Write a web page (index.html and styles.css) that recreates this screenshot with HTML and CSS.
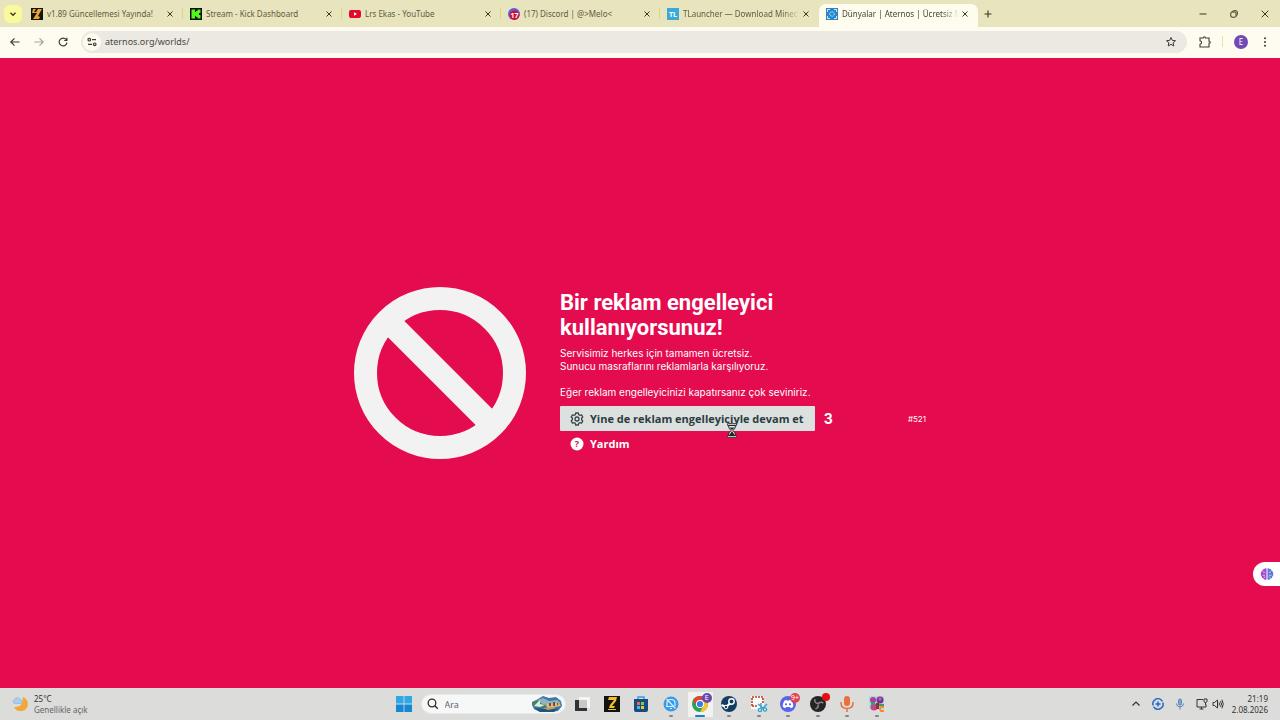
FILE: index.html
```html
<!DOCTYPE html>
<html lang="tr">
<head>
    <meta charset="UTF-8">
    <meta name="viewport" content="width=device-width, initial-scale=1.0">
    <title>Dünyalar | Aternos | Ücretsiz Minecraft Sunucusu</title>
    <link rel="stylesheet" href="styles.css">
</head>
<body>
    <!-- sekmeler -->
    <header class="tab-strip">
        <button class="tab-search" aria-label="Sekmelerde ara">
            <svg width="8" height="8" viewBox="0 0 8 8"><path d="M1.5 2.8 4 5.2 6.5 2.8" fill="none" stroke="#3a3820" stroke-width="1.4"/></svg>
        </button>
        <div class="tabs">
            <div class="tab">
                <svg class="favicon" viewBox="0 0 12 12"><path fill="#17130c" d="M0 0h12v12H0z"/><path fill="#e5a52c" d="M2 1h9L7 8l2 1-1 2H2l4-6H1z"/><path fill="#17130c" d="m5 1-2 3h2l2-3z"/></svg>
                <span class="tab-title">v1.89 Güncellemesi Yayında!</span>
                <button class="tab-close" aria-label="Kapat"><svg viewBox="0 0 8 8"><path d="m1.5 1.5 5 5m0-5-5 5"/></svg></button>
            </div>
            <div class="tab">
                <svg class="favicon" viewBox="0 0 12 12"><path fill="#0c120b" d="M0 0h12v12H0z"/><path fill="#52f71c" d="M1.5 1.5H5V4h1V3h1.500V1.500h3V5H9v2h1.500v3.500h-3V9H6V8H5v2.500H1.500z"/></svg>
                <span class="tab-title">Stream - Kick Dashboard</span>
                <button class="tab-close" aria-label="Kapat"><svg viewBox="0 0 8 8"><path d="m1.5 1.5 5 5m0-5-5 5"/></svg></button>
            </div>
            <div class="tab">
                <svg class="favicon" viewBox="0 0 12 12"><rect y="2" width="12" height="8" rx="2" fill="#e5092f"/><path fill="#fff" d="m5 4.300 3 1.700-3 1.700z"/></svg>
                <span class="tab-title">Lrs Ekas - YouTube</span>
                <button class="tab-close" aria-label="Kapat"><svg viewBox="0 0 8 8"><path d="m1.5 1.5 5 5m0-5-5 5"/></svg></button>
            </div>
            <div class="tab">
                <svg class="favicon" viewBox="0 0 12 12"><circle cx="6" cy="6" r="6" fill="#5a5fd0"/><circle cx="6.500" cy="7.300" r="4.700" fill="#d30f2e"/><text x="6.500" y="10" class="favicon-count">17</text></svg>
                <span class="tab-title">(17) Discord | @&gt;Melo&lt;</span>
                <button class="tab-close" aria-label="Kapat"><svg viewBox="0 0 8 8"><path d="m1.5 1.5 5 5m0-5-5 5"/></svg></button>
            </div>
            <div class="tab">
                <svg class="favicon" viewBox="0 0 12 12"><path fill="#39a9d6" d="M0 0h12v12H0z"/><text x="6" y="9" class="favicon-tl">TL</text></svg>
                <span class="tab-title fade">TLauncher — Download Minec</span>
                <button class="tab-close" aria-label="Kapat"><svg viewBox="0 0 8 8"><path d="m1.5 1.5 5 5m0-5-5 5"/></svg></button>
            </div>
            <div class="tab active">
                <svg class="favicon" viewBox="0 0 12 12"><path fill="#2b87c8" d="M0 0h12v12H0z"/><path fill="none" stroke="#e4f2fa" stroke-width=".9" d="M1.500 4V1.500H4M8 1.500h2.500V4M10.500 8v2.500H8M4 10.500H1.500V8"/><path fill="none" stroke="#e4f2fa" stroke-dasharray="2 1" d="m6 3.300 2.700 2.700L6 8.700 3.300 6z"/></svg>
                <span class="tab-title fade">Dünyalar | Aternos | Ücretsiz M</span>
                <button class="tab-close" aria-label="Kapat"><svg viewBox="0 0 8 8"><path d="m1.5 1.5 5 5m0-5-5 5"/></svg></button>
            </div>
        </div>
        <button class="new-tab" aria-label="Yeni sekme">
            <svg width="8" height="8" viewBox="0 0 8 8"><path d="M4 .5v7M.5 4h7" stroke="#3a3820" stroke-width="1.100"/></svg>
        </button>
        <div class="window-controls">
            <button aria-label="Küçült"><svg width="8" height="8" viewBox="0 0 8 8"><path d="M.5 4h7"/></svg></button>
            <button aria-label="Önceki boyut"><svg width="8" height="8" viewBox="0 0 8 8"><rect x=".8" y="2" width="5.200" height="5.200" rx="1.200"/><path d="M2.300 1.600Q2.500.8 3.500.8H6q1.300 0 1.300 1.300v2.500q0 .9-.9 1.200"/></svg></button>
            <button aria-label="Kapat"><svg width="8" height="8" viewBox="0 0 8 8"><path d="m.7.7 6.600 6.600m0-6.600L.7 7.300"/></svg></button>
        </div>
    </header>

    <!-- adres çubuğu -->
    <nav class="toolbar">
        <button class="nav-button" aria-label="Geri"><svg viewBox="0 0 12 12"><path d="M10.500 6H2M5.500 2.300 1.800 6l3.700 3.700"/></svg></button>
        <button class="nav-button" aria-label="İleri" disabled><svg viewBox="0 0 12 12"><path d="M1.500 6H10M6.500 2.300 10.200 6 6.500 9.700"/></svg></button>
        <button class="nav-button" aria-label="Yenile"><svg viewBox="0 0 12 12"><path d="M9.200 3.700A3.900 3.900 0 1 0 9.900 6.600M9.900 1.800v2.700H7.200"/></svg></button>
        <div class="omnibox">
            <button class="site-info" aria-label="Site bilgileri"><svg width="10" height="10" viewBox="0 0 10 10" fill="none" stroke="#3c3b36" stroke-width="1.200"><circle cx="2.300" cy="2.700" r="1.300"/><path d="M5 2.700h4M1 7.300h4"/><circle cx="7.700" cy="7.300" r="1.300"/></svg></button>
            <input type="text" class="address" aria-label="Adres" value="aternos.org/worlds/">
            <button class="bookmark" aria-label="Yer işareti ekle"><svg width="12" height="12" viewBox="0 0 12 12"><path d="m6 1.500 1.300 2.900 3.200.3-2.400 2.100.7 3.200L6 8.300 3.200 10l.7-3.200-2.400-2.100 3.200-.3z" fill="none" stroke="#3c3b36"/></svg></button>
        </div>
        <div class="toolbar-end">
            <button aria-label="Uzantılar"><svg width="12" height="12" viewBox="0 0 12 12"><path d="M1 2h3.200q0-1.300 1.100-1.300T6.400 2H10v3.200q1.300 0 1.300 1.100T10 7.400V11H1V8.300q1.600-.3 1.600-1.800T1 4.700z" fill="none" stroke="#3c3b36" stroke-width="1.100"/></svg></button>
            <span class="divider"></span>
            <button class="avatar">E</button>
            <button aria-label="Menü"><svg width="12" height="12" viewBox="0 0 12 12" fill="#3c3b36"><circle cx="6" cy="2.300" r="1"/><circle cx="6" cy="6" r="1"/><circle cx="6" cy="9.700" r="1"/></svg></button>
        </div>
    </nav>

    <main class="page">
        <section class="notice">
            <svg class="ban" viewBox="0 0 172 172" fill="none" stroke="#f1f2f1" stroke-width="23"><circle cx="86" cy="86" r="74.500"/><path d="m36 36 100 100"/></svg>
            <div class="notice-text">
                <h1>Bir reklam engelleyici kullanıyorsunuz!</h1>
                <p>Servisimiz herkes için tamamen ücretsiz.<br>Sunucu masraflarını reklamlarla karşılıyoruz.<br><br>Eğer reklam engelleyicinizi kapatırsanız çok seviniriz.</p>
                <div class="actions">
                    <button class="btn btn-continue">
                        <svg viewBox="0 0 14 14" fill="none" stroke="#35464a" stroke-width="1.300"><path stroke-linejoin="round" d="M5.700 1h2.600l.4 1.700 1.100.6 1.700-.5 1.300 2.200L11.600 6.200v1.600l1.200 1.200-1.300 2.200-1.700-.5-1.100.6L8.300 13H5.700l-.4-1.700-1.100-.6-1.700.5L1.200 9l1.200-1.200V6.200L1.200 5l1.300-2.200 1.700.5 1.100-.6z"/><circle cx="7" cy="7" r="2"/></svg>
                        Yine de reklam engelleyiciyle devam et
                        <svg class="cursor" viewBox="0 0 10 15"><path fill="#bfc2c1" stroke="#333" stroke-width=".8" d="M.5.500h9v2h-9zM.5 12.500h9v2h-9z"/><path fill="#e8eaea" stroke="#222" d="M1.500 2.500h7Q8.500 5.500 6 7.500q2.500 2 2.500 5h-7q0-3 2.500-5-2.500-2-2.500-5z"/><path fill="#222" d="M2.500 4.500h5L5 7zM5 8l2.500 4h-5z"/></svg>
                    </button>
                    <span class="countdown">3</span>
                    <small class="code">#521</small>
                </div>
                <button class="btn btn-help">
                    <svg viewBox="0 0 14 14"><circle cx="7" cy="7" r="6.500" fill="#fff"/><text x="7" y="10" class="question">?</text></svg>
                    Yardım
                </button>
            </div>
        </section>
        <button class="side-widget" aria-label="Asistan">
            <svg width="14" height="14" viewBox="0 0 14 14"><path fill="#a548cf" d="M6.500 1.500v11Q4.500 13.500 3.500 11.500 1.500 11.300 1.600 9.300 0 8 1 6.300.5 4.500 2.300 4q.2-2 1.900-2 1-1.200 2.300-.5z"/><path fill="#5a78dc" d="M7.500 1.500v11q2 1 3-1 2-.2 1.900-2.200Q14 8 13 6.300q.5-1.800-1.300-2.300-.2-2-1.900-2-1-1.200-2.300-.5z"/><path fill="none" stroke="#f2d7f3" stroke-width=".8" d="M3 5q1.500-.5 2 .8M2.500 8.500q1.500-1 2.500 0M4 11q0-1 1.200-1.200M11 5q-1.500-.5-2 .8M11.500 8.500q-1.500-1-2.500 0M10 11q0-1-1.200-1.200"/></svg>
        </button>
    </main>

    <!-- görev çubuğu -->
    <footer class="taskbar">
        <div class="weather">
            <svg width="16" height="16" viewBox="0 0 16 16"><path fill="#f2a73a" d="M11 1A7.300 7.300 0 1 1 2 11q9 1 9-10z"/><path fill="#a9cdec" stroke="#7fb0dc" stroke-width=".6" d="M2.500 7.500a2 2 0 0 1 .2-3.900 3 3 0 0 1 5.500-.3 2.200 2.200 0 0 1 .6 4.200z"/></svg>
            <div class="weather-text"><span class="temperature">25°C</span><span>Genellikle açık</span></div>
        </div>

        <div class="task-center">
            <button class="start" aria-label="Başlat"><svg width="16" height="16" viewBox="0 0 16 16"><path fill="#2fa9e6" d="M0 0h7.600v7.600H0zM8.400 0H16v7.600H8.400z"/><path fill="#1488d4" d="M0 8.400h7.600V16H0zM8.400 8.400H16V16H8.400z"/></svg></button>
            <label class="search">
                <svg width="12" height="12" viewBox="0 0 12 12" fill="none" stroke="#2b2b2b" stroke-width="1.300"><circle cx="5" cy="5" r="3.800"/><path d="m7.800 7.800 3 3"/></svg>
                <input type="text" placeholder="Ara" aria-label="Ara">
                <svg width="32" height="18" viewBox="0 0 32 18"><path fill="#3d77a8" d="m1 7 6-3 5-3 6 2 7-1 5 4 1 5-4 5-7 1H9l-6-3-2-4z"/><path fill="#8eb5bd" d="m4 6 8-3 6 3 8-1 4 3-9 2-14-1z"/><path fill="#d6bd82" d="m13 9 15-1 2 3-13 2z"/><path fill="#44835a" d="m1 8 6-3 4 4 5 1-4 3-10-2z"/><path fill="#dcebe4" d="m7 7 2-2v4l5 1-5 2-6-1z"/><path fill="#784d39" d="M18 8h2v3h-2zM22 7h2v4h-2zM26 8h1v2h-1z"/><path fill="#1c587c" d="m3 13 9 1 15-1-4 4H9z"/><path fill="#c9a06d" d="m12 13 10-1 4 1-9 2z"/></svg>
            </label>
            <div class="apps">
                <button class="app" aria-label="Görev görünümü"><svg viewBox="0 0 18 18"><path fill="#f5f5f5" d="M6 2h11v11H6z"/><path fill="#303234" d="M2 5h4v8h8v3H2z"/><path fill="#9a9b9b" d="M6 5h8v8H6z" opacity=".5"/></svg></button>
                <button class="app" aria-label="Zula"><svg viewBox="0 0 18 18"><path fill="#15120b" d="M1 1h16v16H1z"/><path fill="#ecc12d" d="M6 2h8l-1 4-4 5h3l-1 2H6l1-3 4-5H5zM5 14h8v1H5z"/></svg></button>
                <button class="app" aria-label="Mağaza"><svg viewBox="0 0 18 18"><path fill="none" stroke="#3b9de0" stroke-width="1.500" d="M6 5V2h6v3"/><path fill="#174c83" d="M2 4h14v11q0 2-2 2H4q-2 0-2-2z"/><path fill="#f1644d" d="M5 7h3v3H5z"/><path fill="#8acc41" d="M9 7h3v3H9z"/><path fill="#42b9ed" d="M5 11h3v3H5z"/><path fill="#f8c52d" d="M9 11h3v3H9z"/></svg></button>
                <button class="app running" aria-label="Bildirimler"><svg viewBox="0 0 18 18"><circle cx="9" cy="9" r="7.500" fill="#3a9ce9"/><path fill="none" stroke="#d8effc" stroke-width="1.200" stroke-linejoin="round" d="M4 11.500h8.500M5 11V8q0-3.500 4-3.500T13 8v3M8 13.500h2M4.500 4l9 9.500"/></svg></button>
                <button class="app running current" aria-label="Chrome"><svg viewBox="0 0 18 18"><circle cx="9" cy="9" r="8" fill="#29a354"/><path fill="#f7c52d" d="M9 5h6.900A8 8 0 0 1 9 17l3.500-6z"/><path fill="#df4638" d="M5.500 11 2.100 5A8 8 0 0 1 15.900 5H9z"/><circle cx="9" cy="9" r="4" fill="#fff"/><circle cx="9" cy="9" r="3.100" fill="#397ee8"/></svg><span class="badge badge-profile">E</span></button>
                <button class="app running" aria-label="Steam"><svg viewBox="0 0 18 18"><circle cx="9" cy="9" r="8" fill="#123d63"/><path fill="none" stroke="#fff" stroke-width="2.200" d="m1.500 10 4.500 2 4.500-4"/><circle cx="11.500" cy="6.500" r="2.700" fill="#123d63" stroke="#fff" stroke-width="1.400"/><circle cx="6" cy="12" r="1.800" fill="#123d63" stroke="#fff"/></svg></button>
                <button class="app running" aria-label="Ekran alıntısı"><svg viewBox="0 0 18 18"><path fill="#fafafa" d="M1 1h13v13H1z"/><path fill="none" stroke="#bd3b24" stroke-width="1.600" stroke-dasharray="2 1" d="M2 11V2h11v7"/><path fill="none" stroke="#bd3b24" stroke-width="1.600" stroke-dasharray="2 1" d="M2 11h6"/><path fill="none" stroke="#33a3cc" stroke-width="1.500" d="m8 9 5 4m4-4-5 5M11 8v5"/><circle cx="10" cy="15" r="1.700" fill="none" stroke="#33a3cc" stroke-width="1.200"/><circle cx="15" cy="14.500" r="1.700" fill="none" stroke="#33a3cc" stroke-width="1.200"/></svg></button>
                <button class="app running" aria-label="Discord"><svg viewBox="0 0 18 18"><circle cx="9" cy="9" r="8" fill="#5865e8"/><path fill="#fff" d="M5.500 5.500 8 5l.4.700h1.200L10 5l2.500.5q2 3 1.700 6.500l-2.600 1.300-.8-1.300H7.200l-.8 1.300L3.800 12q-.3-3.500 1.700-6.500z"/><circle cx="7" cy="9.300" r="1.100" fill="#5865e8"/><circle cx="11" cy="9.300" r="1.100" fill="#5865e8"/></svg><span class="badge badge-count">9+</span></button>
                <button class="app running" aria-label="OBS"><svg viewBox="0 0 18 18"><circle cx="9" cy="9" r="8" fill="#242526"/><path fill="none" stroke="#8c8e8f" stroke-width="1.400" d="M9 8.500Q5 8 6 4m3 5q2-3 5.500-1M9 9.500q1 3-2.500 4.500"/></svg><span class="badge badge-record"></span></button>
                <button class="app running" aria-label="Mikrofon"><svg viewBox="0 0 18 18"><rect x="6" y="1" width="6" height="10" rx="3" fill="#e8713d"/><path fill="none" stroke="#e8713d" stroke-width="1.500" d="M3 7v1q0 5.500 6 5.500T15 8V7M9 13.500V17"/></svg></button>
                <button class="app running" aria-label="Oyun"><svg viewBox="0 0 18 18"><path fill="#a7dce1" d="M1 1h15v13H1z"/><circle cx="5" cy="5" r="3" fill="#b23aa4"/><circle cx="12" cy="5" r="3.500" fill="#7b318d"/><circle cx="12" cy="4" r="1.500" fill="#d85bc2"/><circle cx="6" cy="12" r="3.500" fill="#c5438e"/><path fill="#35a15c" d="M3 7h4v3H3zM10 9h6v2h-6z"/><path fill="#873247" d="M8 8h3v6H8z"/><path fill="none" stroke="#ef8b35" stroke-width="2" d="M16 12h-3q-2 1 0 4h3"/></svg></button>
            </div>
        </div>

        <div class="tray">
            <button aria-label="Gizli simgeler"><svg viewBox="0 0 12 12" fill="none" stroke="#333" stroke-width="1.200"><path d="m2.500 7.500 3.500-3.500 3.500 3.500"/></svg></button>
            <button aria-label="Eşitleme"><svg viewBox="0 0 12 12" fill="none" stroke="#2668c9" stroke-width="1.500"><path d="M1.200 7.500A5 5 0 0 1 9.500 2.300l1 1M10.800 4.500A5 5 0 0 1 2.500 9.700l-1-1"/><path d="M6 3.500v5M3.500 6h5"/></svg></button>
            <button aria-label="Mikrofon kullanımda"><svg viewBox="0 0 12 12" fill="none" stroke="#5d83b5"><rect x="4.500" y="1" width="3" height="6" rx="1.500" fill="#7da4d4"/><path d="M2.500 5.500q0 3.300 3.500 3.300t3.500-3.300M6 9v2.500"/></svg></button>
            <button class="tray-quick" aria-label="Ağ ve ses">
                <svg viewBox="0 0 12 12" fill="none" stroke="#333"><path d="M7 1.500H1v7.500h9V6.500M3.500 11h4M5.500 9v2"/><path d="M8 1v2.200q0 1.300 1.500 1.300T11 3.200V1zM9.500 4.500V7"/></svg>
                <svg viewBox="0 0 12 12" fill="none" stroke="#333"><path d="M1 4.500h1.500L5.500 2v8L2.500 7.500H1zM7 4.500q1 1.500 0 3M8.500 3q2 3 0 6M10 1.700q2.500 4.300 0 8.600"/></svg>
            </button>
            <div class="clock"><span>21:19</span><span>2.08.2026</span></div>
        </div>
    </footer>
</body>
</html>
```
FILE: styles.css
```css
* {
    box-sizing: border-box;
}

body {
    margin: 0;
    min-height: 100vh;
    display: flex;
    flex-direction: column;
    font-family: "Noto Sans", "Open Sans", sans-serif;
    font-size: 8px;
    color: #3b3a30;
    background: #e40b4e;
}

button {
    display: flex;
    align-items: center;
    justify-content: center;
    padding: 0;
    border: 0;
    background: none;
    font: inherit;
    color: inherit;
}

input {
    min-width: 0;
    padding: 0;
    border: 0;
    outline: 0;
    background: none;
    font: inherit;
    color: inherit;
}

svg {
    flex: none;
}

/* sekmeler */
.tab-strip {
    display: flex;
    align-items: center;
    height: 27px;
    padding-left: 4px;
    background: #e8e4be;
}

.tab-search {
    width: 18px;
    height: 18px;
    margin-right: 2px;
    border-radius: 6px;
    background: #fafa9c;
}

.tabs {
    display: flex;
    flex: 0 1 954px;
    min-width: 0;
    align-self: flex-end;
}

.tab {
    display: flex;
    flex: 1 1 0;
    align-items: center;
    gap: 4px;
    min-width: 0;
    height: 23px;
    padding: 0 7px 4px;
    color: #5f5c40;
    background: linear-gradient(#d6da7c, #d6da7c) no-repeat right 4px / 1px 11px;
}

.tab:nth-child(5) {
    background: none;
}

.tab.active {
    color: #45443a;
    border-radius: 7px 7px 0 0;
    background: #fefcec;
}

.favicon {
    width: 12px;
    height: 12px;
}

.favicon-count,
.favicon-tl {
    font-size: 7px;
    font-weight: bold;
    text-anchor: middle;
    fill: #fff;
}

.tab-title {
    flex: 1;
    overflow: hidden;
    white-space: nowrap;
}

.fade {
    mask-image: linear-gradient(to right, #000 85%, transparent);
}

.tab-close {
    width: 12px;
    height: 12px;
    margin-left: -4px;
}

.tab-close svg {
    width: 8px;
    height: 8px;
    fill: none;
    stroke: #3a3820;
}

.new-tab {
    width: 20px;
    height: 20px;
}

.window-controls {
    display: flex;
    margin-left: auto;
}

.window-controls button {
    width: 31px;
    height: 26px;
}

.window-controls svg {
    fill: none;
    stroke: #3a3820;
}

/* adres çubuğu */
.toolbar {
    display: flex;
    align-items: center;
    height: 31px;
    padding: 0 3px 2px;
    background: #fefcf0;
}

.nav-button {
    width: 24px;
    height: 24px;
}

.nav-button svg {
    width: 12px;
    height: 12px;
    fill: none;
    stroke: #3c3b36;
    stroke-width: 1.2;
}

.nav-button:disabled {
    opacity: 0.45;
}

.omnibox {
    display: flex;
    flex: 1;
    align-items: center;
    height: 22px;
    margin-left: 6px;
    padding: 0 10px 0 2px;
    border-radius: 11px;
    background: #ece8e2;
}

.site-info {
    width: 18px;
    height: 18px;
    border-radius: 50%;
    background: #fdfbf0;
}

.address {
    flex: 1;
    margin-left: 4px;
    font-size: 9px;
    color: #4a4843;
}

.toolbar-end {
    display: flex;
    align-items: center;
    justify-content: space-between;
    width: 90px;
    padding: 0 6px 0 12px;
}

.divider {
    width: 1px;
    height: 11px;
    background: #dcea98;
}

.avatar {
    width: 14px;
    height: 14px;
    border-radius: 50%;
    background: #7049b5;
    color: #fff;
}

/* reklam engelleyici uyarısı */
.page {
    position: relative;
    display: flex;
    flex: 1;
    align-items: center;
    justify-content: center;
    font-family: Inter, Roboto, sans-serif;
    color: #fff;
}

.notice {
    display: flex;
    align-items: center;
    gap: 34px;
    width: 572px;
}

.ban {
    width: 172px;
    height: 172px;
}

.notice-text {
    flex: 1;
}

h1 {
    max-width: 300px;
    margin: 0 0 7px;
    font-family: Roboto, sans-serif;
    font-size: 22px;
    line-height: 25px;
}

p {
    margin: 0 0 7px;
    font-size: 10px;
    line-height: 13px;
}

.actions {
    display: flex;
    align-items: center;
}

.btn {
    position: relative;
    gap: 6px;
    height: 25px;
    padding: 0 11px 0 10px;
    font-family: "Open Sans", sans-serif;
    font-size: 11px;
    font-weight: bold;
    white-space: nowrap;
}

.btn svg {
    width: 14px;
    height: 14px;
}

.btn-continue {
    border-radius: 1px;
    background: #dce0df;
    color: #2c3c40;
}

.btn .cursor {
    position: absolute;
    right: 78px;
    top: 17px;
    width: 10px;
    height: 15px;
}

.question {
    font-size: 9px;
    text-anchor: middle;
    fill: #b01848;
}

.countdown {
    margin-left: 9px;
    font-size: 14px;
    font-weight: bold;
}

.code {
    margin-left: auto;
    font-size: 8px;
}

.side-widget {
    position: absolute;
    right: 0;
    top: 504px;
    width: 27px;
    height: 24px;
    border-radius: 12px 0 0 12px;
    background: #fff;
}

/* görev çubuğu */
.taskbar {
    display: grid;
    grid-template-columns: 1fr auto 1fr;
    align-items: center;
    height: 32px;
    padding: 0 12px;
    background: #dcdcda;
}

.weather {
    display: flex;
    align-items: center;
    gap: 6px;
}

.weather-text,
.clock {
    display: flex;
    flex-direction: column;
    line-height: 11px;
    color: #666;
}

.weather-text .temperature,
.clock {
    color: #333;
}

.task-center {
    display: flex;
    align-items: center;
}

.start {
    width: 30px;
    height: 30px;
}

.search {
    display: flex;
    align-items: center;
    gap: 6px;
    width: 145px;
    height: 20px;
    margin: 0 2px;
    padding: 0 2px 0 5px;
    border: 1px solid #e8e8e8;
    border-radius: 10px;
    background: #f6f7f7;
}

.search input {
    flex: 1;
    font-size: 9px;
}

.search input::placeholder {
    color: #666;
}

.apps {
    display: flex;
    width: 324px;
}

.app {
    position: relative;
    flex: 1;
    height: 31px;
}

.app svg {
    width: 18px;
    height: 18px;
}

.running::after {
    content: "";
    position: absolute;
    left: 50%;
    bottom: 3px;
    width: 4px;
    height: 2px;
    border-radius: 1px;
    transform: translateX(-50%);
    background: #858585;
}

.current {
    background: linear-gradient(#f1f1f0, #f1f1f0) no-repeat center / 25px 25px;
}

.current::after {
    width: 10px;
    background: #1680c8;
}

.badge {
    position: absolute;
    right: 3px;
    top: 4px;
    min-width: 10px;
    height: 10px;
    border-radius: 5px;
    font-size: 7px;
    line-height: 10px;
    text-align: center;
    color: #fff;
}

.badge-profile {
    background: #6949ae;
}

.badge-count {
    background: #df4254;
}

.badge-record {
    width: 8px;
    min-width: 8px;
    height: 8px;
    background: #e80c0c;
}

.tray {
    display: flex;
    align-items: center;
    justify-content: flex-end;
}

.tray button {
    width: 22px;
    height: 24px;
}

.tray svg {
    width: 12px;
    height: 12px;
}

.tray .tray-quick {
    gap: 4px;
    width: 38px;
}

.clock {
    margin-left: 3px;
    text-align: right;
}
```
